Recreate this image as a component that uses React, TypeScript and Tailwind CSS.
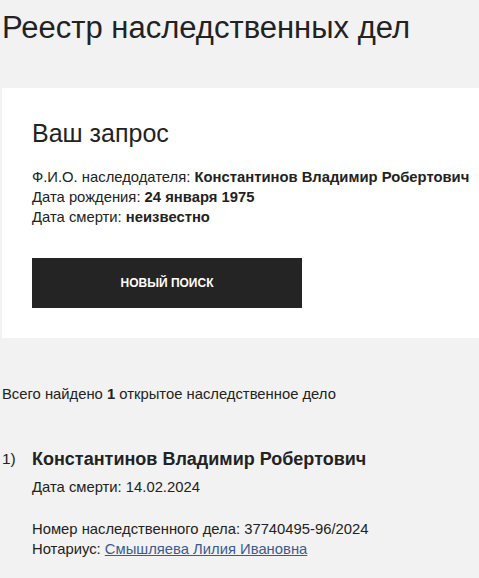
export default function App() {
  return (
    <div className="min-h-[578px] w-[479px] overflow-hidden bg-[#f2f2f2] font-['Liberation_Sans',Arial,sans-serif] text-[#222]">
      <h1 className="pl-[2px] pt-[10px] text-[31px] leading-[36px]">Реестр наследственных дел</h1>

      <div className="ml-[2px] mt-[42px] h-[250px] bg-white pl-[30px] pt-[30px]">
        <h2 className="text-[25px] leading-[30px]">Ваш запрос</h2>
        <div className="mt-[19px] text-[14.8px] leading-[20px]">
          <div>
            Ф.И.О. наследодателя: <b>Константинов Владимир Робертович</b>
          </div>
          <div>
            Дата рождения: <b>24 января 1975</b>
          </div>
          <div>
            Дата смерти: <b>неизвестно</b>
          </div>
        </div>
        <button className="mt-[31px] flex h-[50px] w-[270px] items-center justify-center bg-[#242424] text-[12px] font-bold text-white">
          НОВЫЙ ПОИСК
        </button>
      </div>

      <p className="mt-[46px] pl-[2px] text-[14.8px] leading-[20px]">
        Всего найдено <b>1</b> открытое наследственное дело
      </p>

      <div className="mt-[43px] flex pl-[2px]">
        <div className="w-[30px] text-[15.5px] leading-[24px]">1)</div>
        <div>
          <div className="text-[18px] font-bold leading-[24px]">Константинов Владимир Робертович</div>
          <div className="mt-[6px] text-[14.8px] leading-[20px]">Дата смерти: 14.02.2024</div>
          <div className="mt-[22px] text-[14.8px] leading-[20px]">
            <div>Номер наследственного дела: 37740495-96/2024</div>
            <div>
              Нотариус: <a href="#" className="text-[#3b5b8f] underline">Смышляева Лилия Ивановна</a>
            </div>
          </div>
        </div>
      </div>
    </div>
  );
}
